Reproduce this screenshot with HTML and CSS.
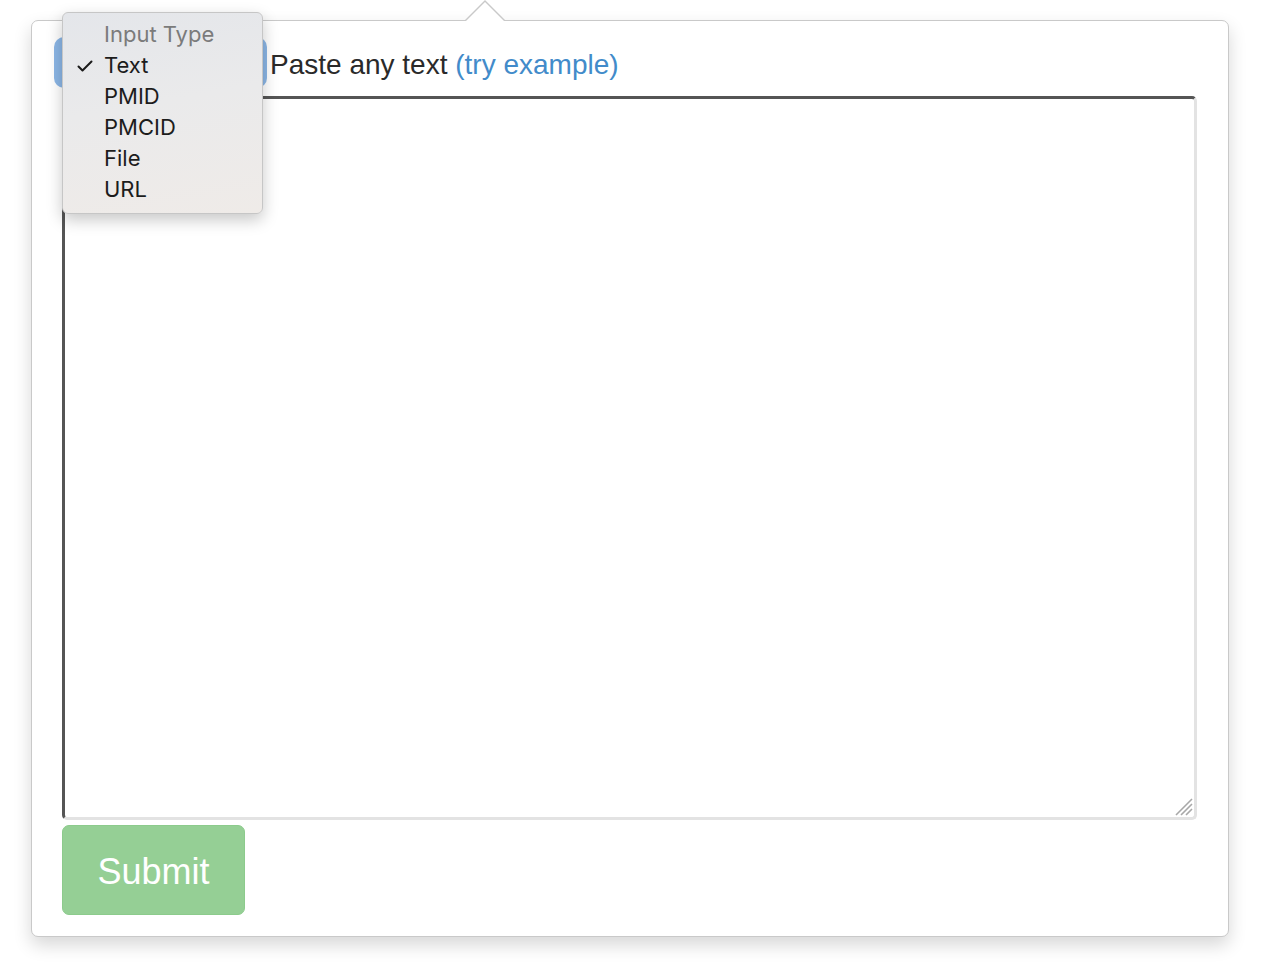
FILE: index.html
```html
<!DOCTYPE html>
<html>
<head>
<meta charset="utf-8">
<link rel="stylesheet" href="styles.css">
</head>
<body>
<div class="card">
  <div class="header">
    <button class="type-btn" type="button" aria-label="Input type: Text"></button>
    <label class="prompt">Paste any text <a class="example" href="#">(try example)</a></label>
  </div>
  <div class="input-wrap">
    <textarea class="input"></textarea>
    <svg class="grip" width="22" height="22" viewBox="0 0 22 22"><path d="M20 4 L4 20 M20 9 L9 20 M20 14 L14 20" stroke="#a8a8a8" stroke-width="1.6" fill="none"/></svg>
  </div>
  <div class="actions">
    <button class="submit" type="button" disabled>Submit</button>
  </div>
</div>
<div class="menu">
  <div class="menu-head">Input Type</div>
  <div class="menu-item checked"><svg class="check" width="16" height="12" viewBox="0 0 16 12"><path d="M1.5 6.5 L5.5 10.5 L14.5 1.5" fill="none" stroke="#1a1a1a" stroke-width="2" stroke-linecap="round" stroke-linejoin="round"/></svg>Text</div>
  <div class="menu-item">PMID</div>
  <div class="menu-item">PMCID</div>
  <div class="menu-item">File</div>
  <div class="menu-item">URL</div>
</div>
</body>
</html>
```
FILE: styles.css
```css
html, body {
  margin: 0;
  padding: 0;
  background: #ffffff;
  font-family: "Liberation Sans", Arial, sans-serif;
}

body {
  position: relative;
  padding: 20px 0 29px 31px;
}

.card {
  position: relative;
  box-sizing: border-box;
  width: 1198px;
  height: 917px;
  border: 1px solid #c9c9c9;
  border-radius: 7px;
  background: #fff;
  box-shadow: 0 8px 18px rgba(0, 0, 0, 0.16);
  padding: 16px 31px 0 30px;
  display: flex;
  flex-direction: column;
}

.card::before,
.card::after {
  content: "";
  position: absolute;
  width: 0;
  height: 0;
  border-style: solid;
  border-color: transparent;
}

.card::before {
  left: 432px;
  top: -21px;
  border-width: 0 21px 21px 21px;
  border-bottom-color: #c9c9c9;
}

.card::after {
  left: 433px;
  top: -19px;
  border-width: 0 20px 20px 20px;
  border-bottom-color: #ffffff;
}

.header {
  display: flex;
  align-items: center;
  margin-left: -8px;
  height: 51px;
}

.type-btn {
  width: 213px;
  height: 51px;
  border: none;
  border-radius: 10px;
  background: #8bb6e6;
}

.prompt {
  margin-left: 3px;
  font-size: 28px;
  color: #2a2a2a;
  line-height: 51px;
  padding-top: 3px;
}

.example {
  color: #428bca;
  text-decoration: none;
}

.input-wrap {
  position: relative;
  width: 1135px;
  height: 724px;
  margin-top: 8px;
}

.input {
  display: block;
  box-sizing: border-box;
  width: 100%;
  height: 100%;
  margin: 0;
  border-width: 3px;
  border-style: solid;
  border-color: #555555 #e3e3e3 #e3e3e3 #555555;
  border-radius: 5px;
  background: #fff;
  font-size: 20px;
  resize: none;
  outline: none;
}

.grip {
  position: absolute;
  right: 3px;
  bottom: 3px;
  pointer-events: none;
}

.actions {
  margin-top: 5px;
}

.submit {
  box-sizing: border-box;
  width: 183px;
  height: 90px;
  border: 1px solid #8ccb8c;
  border-radius: 7px;
  background: #95cf95;
  color: #ffffff;
  font-family: "Liberation Sans", Arial, sans-serif;
  font-size: 36px;
  padding: 3px 0 0 0;
}

.menu {
  position: absolute;
  left: 62px;
  top: 12px;
  box-sizing: border-box;
  width: 201px;
  height: 202px;
  padding: 6px 0 0 0;
  border: 1px solid #c6c6c6;
  border-radius: 6px;
  background: linear-gradient(170deg, #e4e6ea 0%, #eaeaeb 45%, #efebe8 100%);
  box-shadow: 0 6px 16px rgba(0, 0, 0, 0.22);
  font-family: Inter, "Liberation Sans", sans-serif;
  font-size: 22px;
}

.menu-head,
.menu-item {
  position: relative;
  height: 31px;
  line-height: 31px;
  padding-left: 41px;
  color: #1c1c1c;
}

.menu-head {
  color: #7b7b7b;
}

.check {
  position: absolute;
  left: 14px;
  top: 10px;
}
```
